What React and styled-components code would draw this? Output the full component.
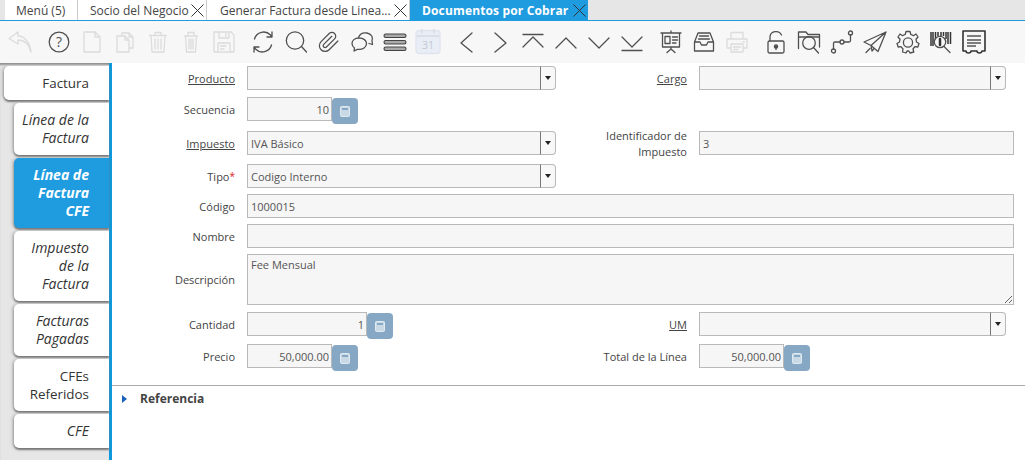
import React from "react";
import styled, { createGlobalStyle } from "styled-components";

const Global = createGlobalStyle`
  html, body { margin: 0; padding: 0; background: #fff; }
  body { font-family: "Open Sans", "Liberation Sans", sans-serif; font-size: 12px; color: #444; }
  * { box-sizing: border-box; }
`;

const Page = styled.div`
  width: 1025px;
  height: 460px;
  display: flex;
  flex-direction: column;
  overflow: hidden;
  background: #fff;
`;

const TabBar = styled.div`
  height: 21px;
  flex: none;
  display: flex;
  padding-left: 5px;
  background: #e6e6e6;
  border-bottom: 1px solid #1f9ce0;
`;

const WinTab = styled.div`
  width: ${(p) => p.$w}px;
  height: 20px;
  display: flex;
  align-items: center;
  justify-content: space-between;
  padding: 0 2px 0 ${(p) => p.$pl}px;
  background: ${(p) => (p.$active ? "#1f9ce0" : "#fff")};
  color: ${(p) => (p.$active ? "#fff" : "#444")};
  font-weight: ${(p) => (p.$active ? 700 : 400)};
  letter-spacing: ${(p) => (p.$active ? "0.15px" : "0")};
  border-right: ${(p) => (p.$active ? "0" : "1px solid #ccc")};
  white-space: nowrap;
`;

const CloseIcon = () => (
  <svg width="13" height="13" viewBox="0 0 13 13" style={{ flex: "none" }}>
    <path d="M.5.5l12 12M12.5.5l-12 12" stroke="#333" strokeWidth="1" fill="none" />
  </svg>
);

const Toolbar = styled.div`
  height: 42px;
  flex: none;
  display: flex;
  align-items: center;
  padding-left: 3px;
  background: #f7f7f7;
`;

const ToolButton = styled.div`
  width: 33px;
  height: 42px;
  flex: none;
  display: flex;
  align-items: center;
  justify-content: center;
  margin-left: ${(p) => (p.$sep ? 6 : 0)}px;
  color: ${(p) => (p.$off ? "#dcdcdc" : "#505050")};
`;

const Ico = ({ children, sw = 1.3 }) => (
  <svg width="26" height="26" viewBox="0 0 26 26" fill="none" stroke="currentColor" strokeWidth={sw} strokeLinejoin="round" strokeLinecap="round">
    {children}
  </svg>
);

const IconText = styled.text`
  font-family: "Open Sans", "Liberation Sans", sans-serif;
  stroke: none;
`;

const icons = [
  { off: true, d: <path d="M11 3 L2 9.5 L11 15 V11 C17 11 22 15 24 23 C23 14 18 7 11 7 Z" /> },
  { sep: true, d: <><circle cx="13" cy="13" r="9.8" /><IconText x="13" y="18" textAnchor="middle" fontSize="14" fill="currentColor">?</IconText></> },
  { off: true, d: <path d="M5 3 H16 L21 8 V23 H5 Z M16 3 V8 H21" /> },
  { off: true, d: <path d="M10 7 V4 H17 L21 8 V19 H17 M17 4 V8 H21 M5 7 H13 L17 11 V23 H5 Z M13 7 V11 H17" /> },
  { off: true, d: <path d="M4.500 6.500 H21.500 M10 6.500 V3.500 H16 V6.500 M6 6.500 L7 23 H19 L20 6.500 M10 10 V20 M13 10 V20 M16 10 V20" /> },
  { off: true, d: <path d="M6.500 7 H19.500 M10 7 V3.500 H16 V7 M7.500 7 L8.500 23 H17.500 L18.500 7 M11 10 V20 M13 10 V20 M15 10 V20" /> },
  { off: true, d: <path d="M3 3 H20 L23 6 V23 H3 Z M8 3 V9 H18 V3 M15 4.500 V7.500 M7 23 V14 H19 V23 M9.500 17 H15 M9.500 20 H13" /> },
  { sep: true, d: <path d="M4.500 10 A9.500 9.500 0 0 1 20.500 6 L22 8 M22 3 V8 H17 M21.500 16 A9.500 9.500 0 0 1 5.500 20 L4 18 M4 23 V18 H9" /> },
  { d: <><circle cx="12" cy="11.500" r="8.700" /><path d="M18.500 17.500 L23.500 23" /></> },
  { d: <g transform="translate(1.500 1.500) scale(0.95)"><path d="m21.44 11.05-9.19 9.19a6 6 0 0 1-8.49-8.49l8.57-8.57A4 4 0 1 1 18 8.84l-8.59 8.57a2 2 0 0 1-2.83-2.83l8.49-8.48" /></g> },
  { d: <path d="M9.500 8.500 C11 4.500 15 3.500 18 4 C22.500 4.800 24.500 8.500 23 12 L23.500 15.500 L20 14.500 M10 9 C5.500 9 3 11.500 3 14.500 C3 16.500 4 18 5.500 19 L5 22 L8.500 20.300 C14 21 17.500 18 17.500 14.500 C17.500 11.500 14.500 9 10 9 Z" /> },
  { d: <g fill="#aaa" stroke="#444" strokeWidth="1.1"><rect x="2" y="5" width="22" height="3.500" rx="1.700" /><rect x="2" y="11.500" width="22" height="3.500" rx="1.700" /><rect x="2" y="18" width="22" height="3.500" rx="1.700" /></g> },
  { off: true, d: <><rect x="1" y="1.500" width="24" height="23" rx="3" fill="#e9edf5" stroke="#dfe4ee" /><path d="M2 7 H24 M7 .5 V4 M19 .5 V4" stroke="#d5dae4" /><IconText x="13" y="20" textAnchor="middle" fontSize="11" fill="#c4c9d2">31</IconText></> },
  { sep: true, d: <path d="M18 4 L7 14 L18 23" /> },
  { d: <path d="M8 4 L19 14 L8 23" /> },
  { d: <path d="M3 5.500 H23 M3 18 L13 8 L23 18" /> },
  { d: <path d="M3 19 L13 9 L23 19" /> },
  { d: <path d="M3 9 L13 19 L23 9" /> },
  { d: <path d="M3 8 L13 18 L23 8 M3 21.500 H23" /> },
  { sep: true, d: <path d="M3 4 H23 M4.500 4 V18 H21.500 V4 M13 2 V4 M13 18 V20 M9 23.500 L13 20 L17 23.500 M7 7.500 H12 V14.500 H7 Z M14.500 8 H19.500 M14.500 11 H19.500 M14.500 14 H18" /> },
  { d: <path d="M3.500 13 L7 4 H19 L22.500 13 V22 H3.500 Z M3.500 13 H9 L10.500 16 H15.500 L17 13 H22.500 M8.500 7 H17.500 M7.500 10 H18.500" /> },
  { off: true, d: <path d="M7 10 V3.500 H19 V10 M7 19 H3 V10 H23 V19 H19 M7 15 H19 V23 H7 Z M9.500 18 H16.500 M9.500 20.500 H14 M19 13 H20.500" /> },
  { sep: true, d: <><path d="M7 12 V7.500 A6 5.500 0 0 1 18.500 6" /><rect x="5" y="12" width="16" height="12" rx="1.500" /><circle cx="13" cy="17.500" r="1.600" fill="currentColor" /><path d="M13 18 V20.500" /></> },
  { d: <><path d="M2.500 19.500 V3 H10 L12 5.500 H23.500 V18 M2.500 8 H23.500" /><circle cx="13" cy="14" r="6.300" /><path d="M17.500 18.500 L22.500 24" /></> },
  { d: <><circle cx="4.500" cy="22" r="2" /><circle cx="13" cy="13" r="2" /><circle cx="21.500" cy="4" r="2" /><path d="M4.500 20 V14.500 Q4.500 13 6 13 H11 M15 13 H20 Q21.500 13 21.500 11.500 V6" /></> },
  { d: <path d="M24 3 L2 13 L9 16.500 L16 22.500 Z M24 3 L9 16.500 L10 22 M4 23.500 L8 19.500 M10 22 L12 19.500" /> },
  { d: <><path d="M11 2.500 H15 L15.800 5.500 L18.500 6.700 L21 5 L23 8 L21 10.200 L21.500 13 L24 14.500 L22.800 18 L19.800 17.600 L18 20 L18.800 23 L15 24 L13.800 22 H12 L11 24 L7.500 23 L8 20 L6 17.600 L3.200 18 L2 14.500 L4.500 13 L5 10.200 L3 8 L5 5 L7.500 6.700 L10.200 5.500 Z" /><circle cx="13" cy="13.500" r="4.600" /></> },
  { d: <><path d="M3 3 V17 M5 3 V17 M7.500 3 V10 M10 3 V7 M13 3 V7 M15.500 3 V7 M18 3 V10 M20 3 V15 M22.500 3 V15" stroke="#333" strokeWidth="1.500" strokeLinecap="butt" /><circle cx="12" cy="13" r="5.700" fill="#f7f7f7" /><path d="M12 10 V16" stroke="#333" strokeWidth="2.500" /><path d="M16 17.500 L22 23.500" /></> },
  { d: <><path d="M2 2 H24 V22 L21 22 A2.500 2 0 0 1 16 22 H10 A2.500 2 0 0 1 5 22 H2 Z" stroke="#333" strokeWidth="1.600" /><path d="M6 7 H20 M6 11 H20 M6 14 H20 M6 17 H15" stroke="#555" strokeWidth="1.700" strokeLinecap="butt" /></> },
];

const Body = styled.div`
  flex: 1;
  display: flex;
  min-height: 0;
`;

const Sidebar = styled.div`
  width: 112px;
  flex: none;
  display: flex;
  flex-direction: column;
  gap: 3px;
  padding-top: 3px;
  background: #e6e6e6;
  border-right: 3px solid #0f99dc;
  box-shadow: inset 0 3px 2px -1px #8f8f8f;
`;

const SideTab = styled.div`
  margin-left: ${(p) => (p.$top ? 4 : 14)}px;
  padding: 8px 20px 8px 6px;
  line-height: 18px;
  font-size: ${(p) => (p.$plain ? 13.4 : 14)}px;
  text-align: right;
  border-radius: 5px 0 0 5px;
  font-style: ${(p) => (p.$plain ? "normal" : "italic")};
  font-weight: ${(p) => (p.$active ? 700 : 400)};
  color: ${(p) => (p.$active ? "#fff" : "#333")};
  background: ${(p) => (p.$active ? "#1f9ce0" : "#fff")};
  box-shadow: 0 2px 2px #777, -2px 0 3px #bdbdbd;
`;

const Main = styled.div`
  flex: 1;
  min-width: 0;
`;

const Form = styled.div`
  display: grid;
  grid-template-columns: 135px 309px 143px 315px;
  grid-template-rows: 31px 34px 33px 30px 30px 30px 58px 32px 24px;
  padding-top: 3px;
  font-size: 11px;
`;

const Label = styled.div`
  height: ${(p) => p.$h || 24}px;
  display: flex;
  align-items: center;
  justify-content: flex-end;
  padding: 1px 12px 0 0;
  text-align: right;
  line-height: 16px;
  color: #444;
  text-decoration: ${(p) => (p.$link ? "underline" : "none")};
`;

const Star = styled.span`
  color: #e02020;
  font-size: 10px;
  align-self: flex-start;
  margin-top: 3px;
`;

const Combo = styled.div`
  height: 24px;
  width: ${(p) => p.$w || "100%"};
  display: flex;
  align-items: center;
`;

const Input = styled.input`
  width: ${(p) => (p.$w ? p.$w + "px" : "100%")};
  flex: ${(p) => (p.$w ? "none" : "1")};
  min-width: 0;
  height: 24px;
  padding: 0 ${(p) => (p.$num ? 2 : 3)}px 0 3px;
  background: #f6f6f6;
  border: 1px solid #b9b9b9;
  font: 11px "Open Sans", "Liberation Sans", sans-serif;
  color: #555;
  text-align: ${(p) => (p.$num ? "right" : "left")};
  outline: none;
`;

const ArrowBtn = styled.div`
  width: 16px;
  flex: none;
  height: 24px;
  display: flex;
  align-items: center;
  justify-content: center;
  background: #f8f8f8;
  border: 1px solid #b9b9b9;
  border-left: 1px solid #777;
  border-radius: 0 4px 4px 0;
  margin-left: -1px;
  &::after {
    content: "";
    border-left: 3.500px solid transparent;
    border-right: 3.500px solid transparent;
    border-top: 4px solid #222;
  }
`;

const CalcBtn = styled.div`
  width: 26px;
  height: 26px;
  flex: none;
  margin-top: 1px;
  align-self: flex-start;
  display: flex;
  align-items: center;
  justify-content: center;
  background: #86a8c4;
  border-radius: 4px;
`;

const CalcIcon = () => (
  <svg width="10" height="11" viewBox="0 0 10 11">
    <rect x=".5" y=".5" width="9" height="10" rx="1" fill="#c9d9e6" stroke="#dfe9f1" />
    <rect x="2" y="2" width="6" height="2" fill="#86a8c4" />
  </svg>
);

const TextArea = styled.textarea`
  grid-column: 2 / 5;
  width: 100%;
  height: 51px;
  padding: 2px 3px;
  background: #f6f6f6;
  border: 1px solid #b9b9b9;
  font: 11px/15px "Open Sans", "Liberation Sans", sans-serif;
  color: #555;
  outline: none;
  resize: both;
  display: block;
`;

const Wide = styled.div`
  grid-column: 2 / 5;
`;

const Empty = styled.div`
  grid-column: 3 / 5;
`;

const Section = styled.div`
  margin-top: 17px;
  border-top: 1px solid #aaa;
  display: flex;
  align-items: center;
  height: 26px;
  padding-left: 10px;
  gap: 13px;
  font-weight: 700;
  color: #444;
`;

const Caret = styled.span`
  width: 0;
  height: 0;
  border-left: 5px solid #1a62bd;
  border-top: 4px solid transparent;
  border-bottom: 4px solid transparent;
`;

const Select = ({ value = "", w }) => (
  <Combo $w={w}>
    <Input readOnly value={value} />
    <ArrowBtn />
  </Combo>
);

const Num = ({ value, w }) => (
  <Combo>
    <Input readOnly $num $w={w} value={value} />
    <CalcBtn><CalcIcon /></CalcBtn>
  </Combo>
);

export default function App() {
  return (
    <Page>
      <Global />
      <TabBar>
        <WinTab $w={73} $pl={11}>Menú (5)</WinTab>
        <WinTab $w={129} $pl={12}>Socio del Negocio<CloseIcon /></WinTab>
        <WinTab $w={203} $pl={13}>Generar Factura desde Linea...<CloseIcon /></WinTab>
        <WinTab $w={178} $pl={12} $active>Documentos por Cobrar<CloseIcon /></WinTab>
      </TabBar>
      <Toolbar>
        {icons.map((ic, i) => (
          <ToolButton key={i} $sep={ic.sep} $off={ic.off}>
            <Ico>{ic.d}</Ico>
          </ToolButton>
        ))}
      </Toolbar>
      <Body>
        <Sidebar>
          <SideTab $top $plain>Factura</SideTab>
          <SideTab>Línea de la Factura</SideTab>
          <SideTab $active>Línea de Factura CFE</SideTab>
          <SideTab>Impuesto de la Factura</SideTab>
          <SideTab>Facturas Pagadas</SideTab>
          <SideTab $plain>CFEs Referidos</SideTab>
          <SideTab>CFE</SideTab>
        </Sidebar>
        <Main>
          <Form>
            <Label $link>Producto</Label>
            <Select w="309px" />
            <Label $link>Cargo</Label>
            <Select w="307px" />

            <Label>Secuencia</Label>
            <Num value="10" w={85} />
            <Empty />

            <Label $link>Impuesto</Label>
            <Select value="IVA Básico" />
            <Label>Identificador de Impuesto</Label>
            <Input readOnly value="3" />

            <Label>Tipo<Star>*</Star></Label>
            <Select value="Codigo Interno" />
            <Empty />

            <Label>Código</Label>
            <Wide><Input readOnly value="1000015" /></Wide>

            <Label>Nombre</Label>
            <Wide><Input readOnly value="" /></Wide>

            <Label $h={51}>Descripción</Label>
            <TextArea readOnly defaultValue="Fee Mensual" />

            <Label>Cantidad</Label>
            <Num value="1" w={120} />
            <Label $link>UM</Label>
            <Select w="307px" />

            <Label>Precio</Label>
            <Num value="50,000.00" w={85} />
            <Label>Total de la Línea</Label>
            <Num value="50,000.00" w={85} />
          </Form>
          <Section><Caret />Referencia</Section>
        </Main>
      </Body>
    </Page>
  );
}
